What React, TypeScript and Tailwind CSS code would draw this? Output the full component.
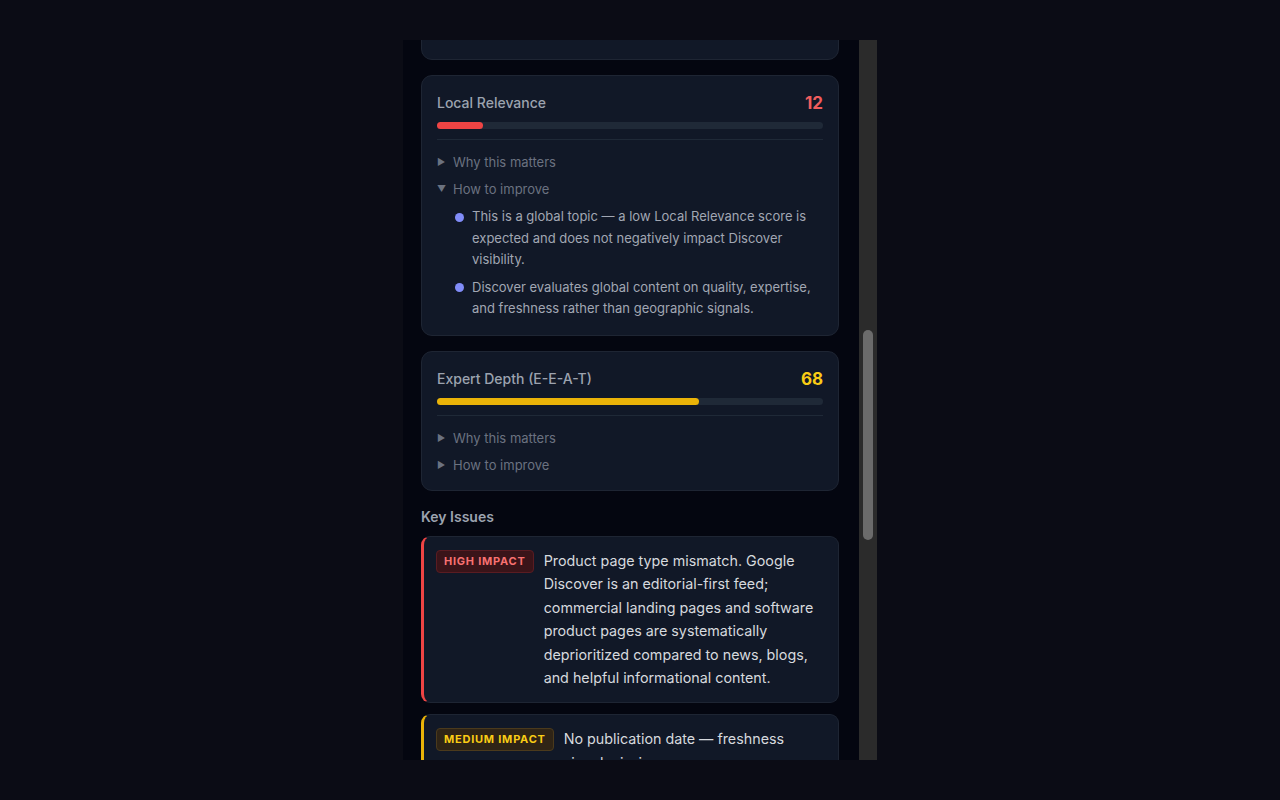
import React from "react";

function Bar({ value, color }: { value: number; color: string }) {
  return (
    <div className="mt-[8px] h-[7px] w-full rounded-full bg-[#1f2937]">
      <div className={`h-[7px] rounded-full ${color}`} style={{ width: `${value}%` }} />
    </div>
  );
}

function Summary({ open, label }: { open?: boolean; label: string }) {
  return (
    <div className="flex h-[20px] items-center text-[13px] leading-[20px] text-[#6b7280]">
      <span className="mr-[8px] inline-block w-[8px] text-[9px] leading-[20px] text-[#6b7280]">
        {open ? "▼" : "▶"}
      </span>
      {label}
    </div>
  );
}

function MetricCard({
  title,
  score,
  scoreColor,
  barColor,
  value,
  bullets,
}: {
  title: string;
  score: string;
  scoreColor: string;
  barColor: string;
  value: number;
  bullets?: string[];
}) {
  return (
    <div className="rounded-[11px] border border-[#1e2533] bg-[#111827] px-[15px] pt-[16px] pb-[15px]">
      <div className="flex h-[22px] items-center justify-between">
        <span className="text-[14px] font-medium leading-[22px] text-[#9ca3af]">{title}</span>
        <span className={`text-[17px] font-bold leading-[22px] ${scoreColor}`}>{score}</span>
      </div>
      <Bar value={value} color={barColor} />
      <div className="mt-[10px] border-t border-[#1f2937] pt-[12px]">
        <div className="flex flex-col gap-[7px]">
          <Summary label="Why this matters" />
          <Summary label="How to improve" open={!!bullets} />
        </div>
        {bullets && (
          <ul className="mt-[7px] flex flex-col gap-[6px] pl-[18px]">
            {bullets.map((b, i) => (
              <li key={i} className="flex items-start gap-[8px]">
                <span className="mt-[6.5px] h-[9px] w-[9px] shrink-0 rounded-full bg-[#818cf8]" />
                <span className="text-[13px] leading-[21.5px] text-[#a1a7b3]">{b}</span>
              </li>
            ))}
          </ul>
        )}
      </div>
    </div>
  );
}

function IssueCard({
  level,
  text,
  border,
  badge,
}: {
  level: string;
  text: string;
  border: string;
  badge: string;
}) {
  return (
    <div
      className={`flex items-start gap-[10px] rounded-[9px] border border-[#1e2533] border-l-[3px] ${border} bg-[#111827] pt-[12px] pb-[12px] pl-[12px] pr-[12px]`}
    >
      <span
        className={`mt-[1px] shrink-0 rounded-[4px] border px-[7px] text-[11px] font-bold leading-[21px] tracking-[0.07em] ${badge}`}
      >
        {level}
      </span>
      <p className="text-[14.3px] leading-[23.6px] text-[#d6d9de]">{text}</p>
    </div>
  );
}

export default function App() {
  return (
    <div
      className="flex min-h-screen justify-center bg-[#0b0c15] pt-[40px]"
      style={{ fontFamily: "Inter, 'Noto Sans', sans-serif" }}
    >
      <div className="flex h-[720px] w-[474px] bg-[#040610]">
        <div className="flex-1 overflow-hidden pl-[18px] pr-[20px]">
          <div className="mt-[-100px] flex flex-col gap-[15px]">
            <div className="h-[120px] rounded-[11px] border border-[#1e2533] bg-[#111827]" />
            <MetricCard
              title="Local Relevance"
              score="12"
              scoreColor="text-[#f05d5d]"
              barColor="bg-[#ef4444]"
              value={12}
              bullets={[
                "This is a global topic — a low Local Relevance score is expected and does not negatively impact Discover visibility.",
                "Discover evaluates global content on quality, expertise, and freshness rather than geographic signals.",
              ]}
            />
            <MetricCard
              title="Expert Depth (E-E-A-T)"
              score="68"
              scoreColor="text-[#facc15]"
              barColor="bg-[#eab308]"
              value={68}
            />
          </div>
          <h3 className="mt-[16px] text-[14px] font-semibold leading-[20px] text-[#9ca3af]">Key Issues</h3>
          <div className="mt-[9px] flex flex-col gap-[11px]">
            <IssueCard
              level="HIGH IMPACT"
              border="border-l-[#ef4444]"
              badge="border-[#5a1c22] bg-[#3a1419] text-[#f87171]"
              text="Product page type mismatch. Google Discover is an editorial-first feed; commercial landing pages and software product pages are systematically deprioritized compared to news, blogs, and helpful informational content."
            />
            <IssueCard
              level="MEDIUM IMPACT"
              border="border-l-[#eab308]"
              badge="border-[#4b3a1c] bg-[#2f2416] text-[#facc15]"
              text="No publication date — freshness signal missing."
            />
          </div>
        </div>
        <div className="flex w-[18px] shrink-0 flex-col bg-[#2b2b2b] px-[4px]">
          <div className="mt-[290px] h-[210px] w-[10px] rounded-full bg-[#6b6b6b]" />
        </div>
      </div>
    </div>
  );
}
